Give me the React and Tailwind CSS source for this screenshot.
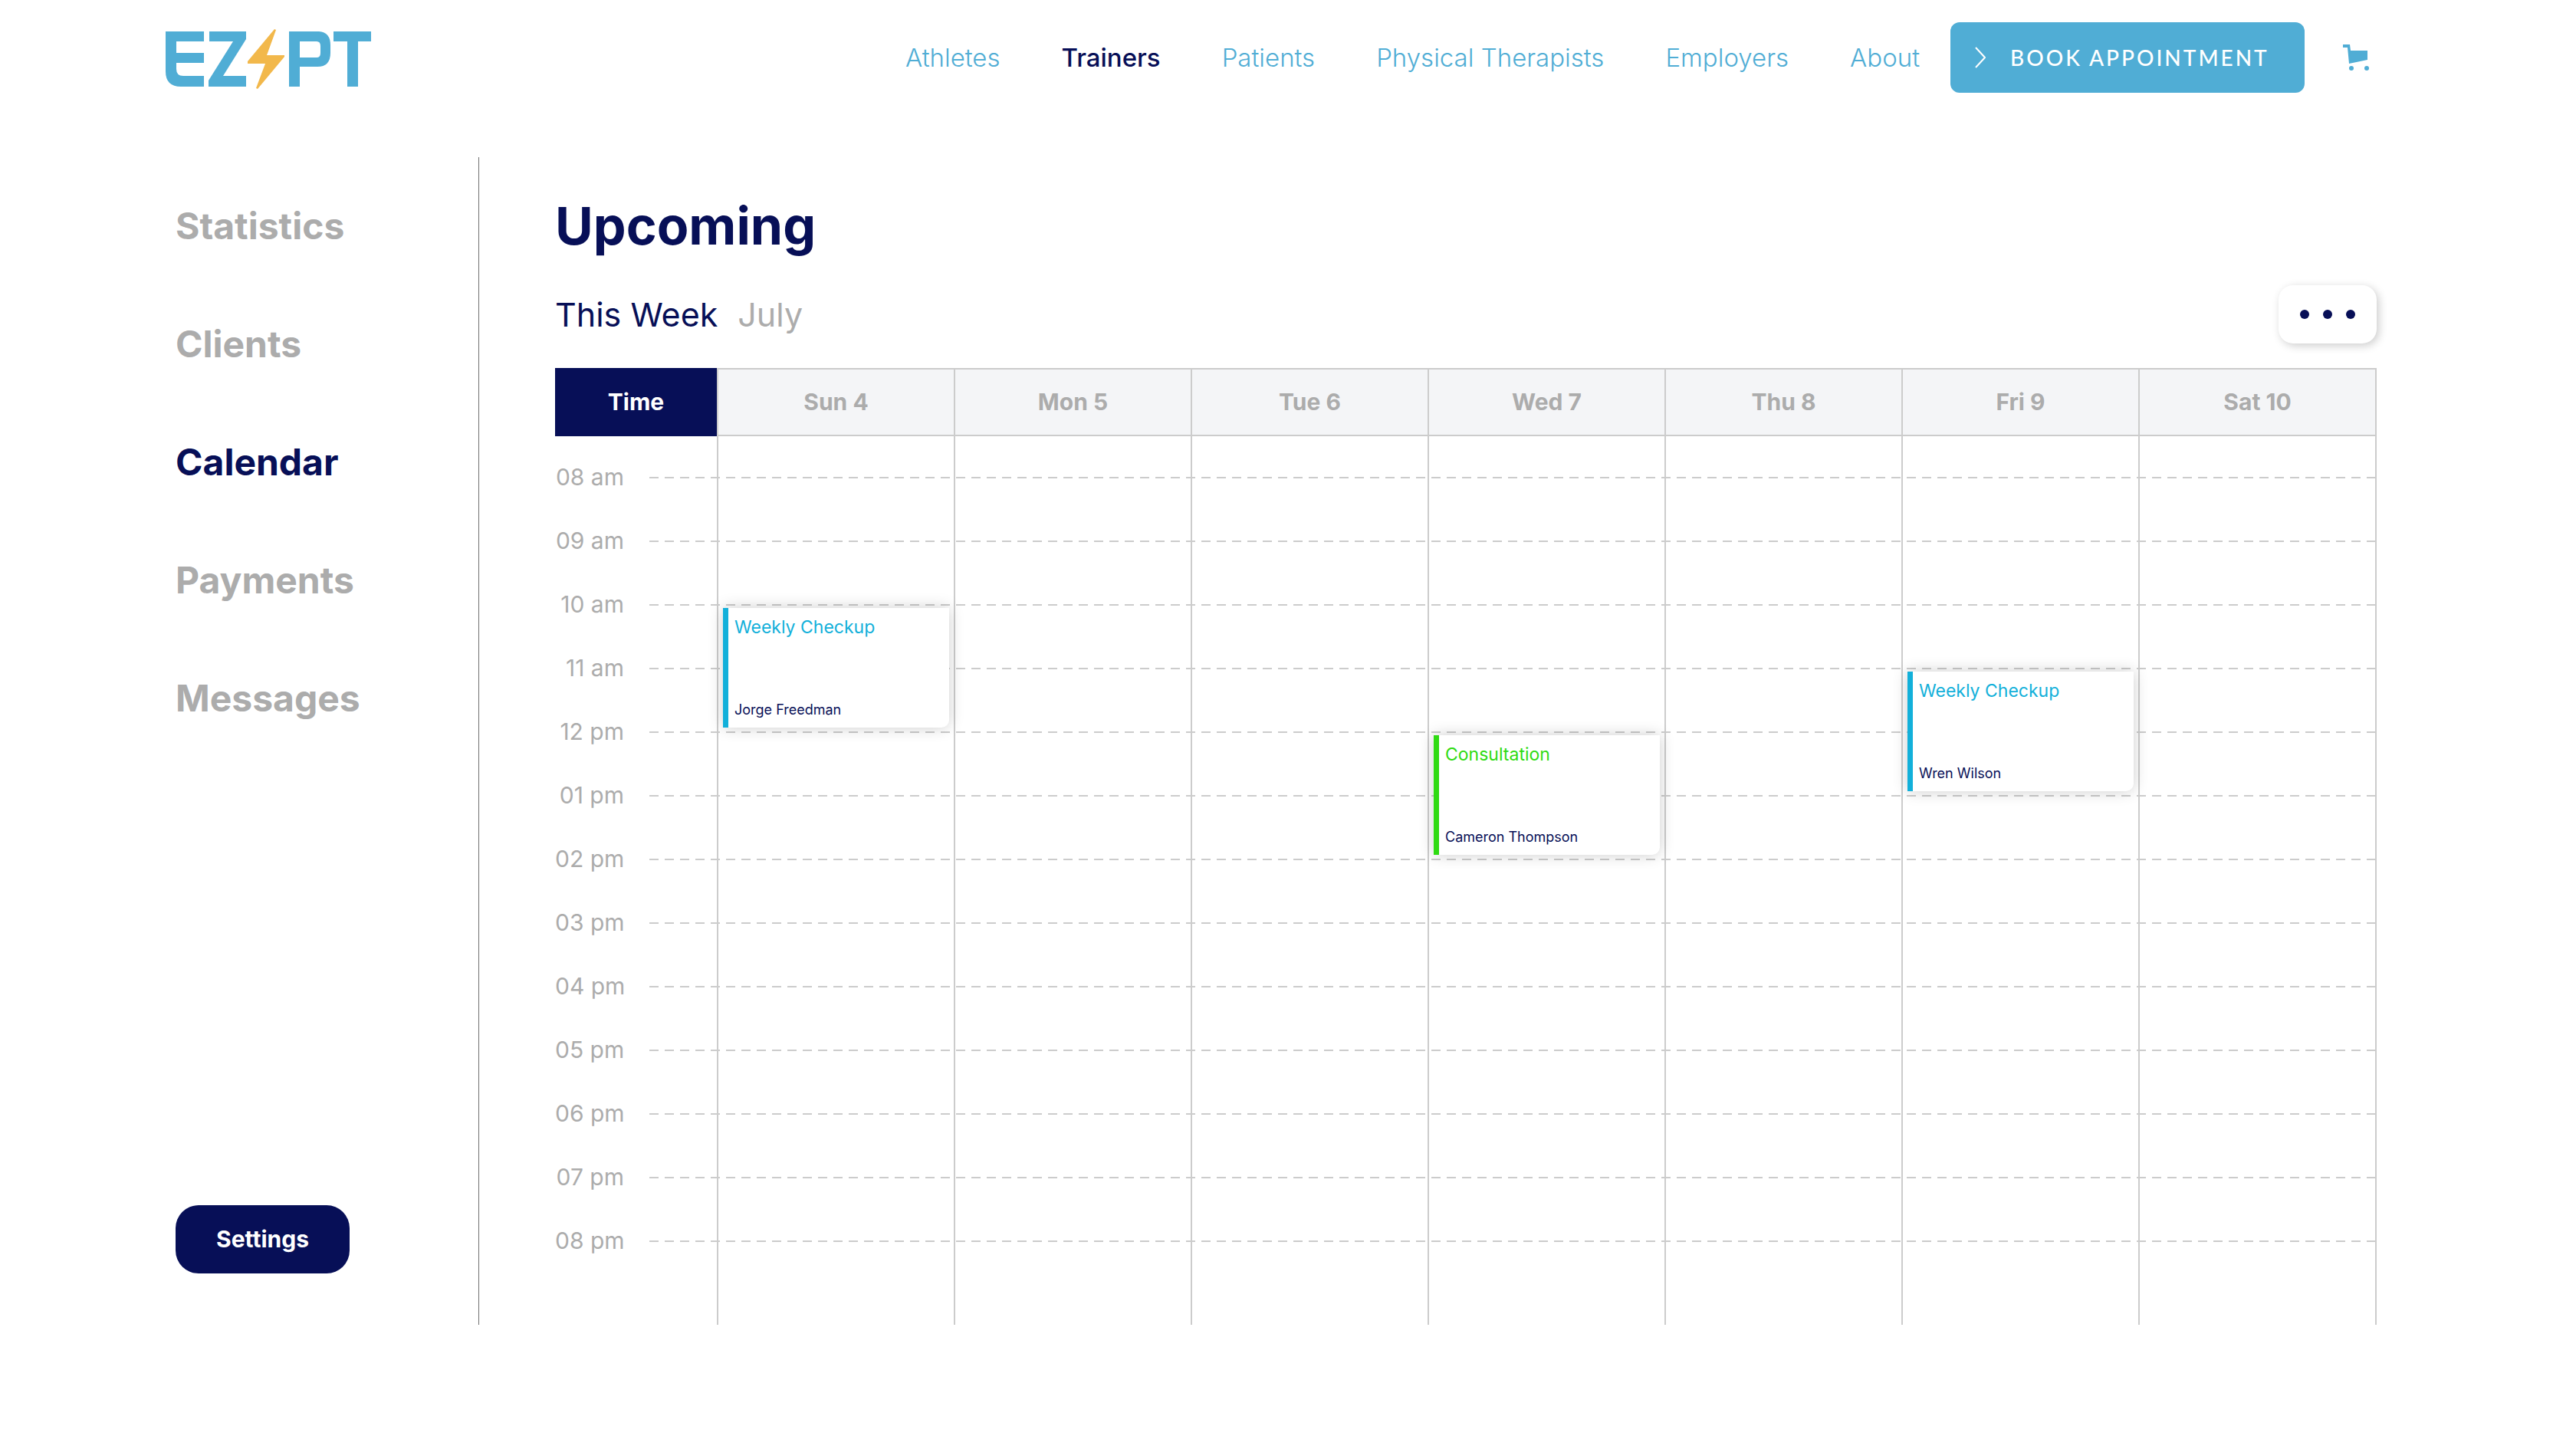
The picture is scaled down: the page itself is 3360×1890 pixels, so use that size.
import React from "react";

const navLinks = ["Athletes", "Trainers", "Patients", "Physical Therapists", "Employers", "About"];
const sideLinks = ["Statistics", "Clients", "Calendar", "Payments", "Messages"];
const days = ["Sun 4", "Mon 5", "Tue 6", "Wed 7", "Thu 8", "Fri 9", "Sat 10"];
const hours = ["08 am", "09 am", "10 am", "11 am", "12 pm", "01 pm", "02 pm", "03 pm", "04 pm", "05 pm", "06 pm", "07 pm", "08 pm"];
const events = [
  { day: "Sun 4", hour: "10 am", title: "Weekly Checkup", person: "Jorge Freedman", tone: "border-[#12b0da] text-[#12b0da]" },
  { day: "Wed 7", hour: "12 pm", title: "Consultation", person: "Cameron Thompson", tone: "border-[#2fdb12] text-[#2fdb12]" },
  { day: "Fri 9", hour: "11 am", title: "Weekly Checkup", person: "Wren Wilson", tone: "border-[#12b0da] text-[#12b0da]" },
];

function Logo() {
  return (
    <svg viewBox="0 0 268 80" className="h-20 w-[268px]" role="img" aria-label="EZPT">
      <g fill="#50add5">
        <path d="M0 4H50V17H14V32H50V45H14V53Q14 62 23 62H50V76H20Q0 76 0 56Z" />
        <path d="M57 4H105V14L75 62H105V76H56V68L88 17H57Z" />
        <path fillRule="evenodd" d="M161 4H200Q215 5 215 22V32Q215 50 198 50H175V76H161ZM175 17V38H197Q202 38 202 32V23Q202 17 197 17Z" />
        <path d="M219 4H268V17H251V76H237V17H219Z" />
      </g>
      <path d="M142 1 107 43V46H130L118 78L120 79L155 37V35H132L144 2Z" fill="#f2b84b" />
    </svg>
  );
}

function EventCard({ event }) {
  return (
    <article className={"absolute left-[6px] right-[6px] top-[46px] z-10 flex h-[156px] flex-col justify-between rounded-br-[10px] border-l-[7px] bg-white py-[10px] pl-2 shadow-[0_0_20px_rgba(0,0,0,0.2)] " + event.tone}>
      <h3 className="text-[23px] leading-[30px]">{event.title}</h3>
      <p className="text-[18px] leading-[26px] text-[#070f57]">{event.person}</p>
    </article>
  );
}

function SpacerRow({ height }) {
  return (
    <tr className={height}>
      <td />
      {days.map((d) => <td key={d} className="border-l-2 border-[#ccc]" />)}
    </tr>
  );
}

export default function App() {
  return (
    <div className="min-h-screen bg-white font-['Inter',sans-serif] text-[#070f57]">
      <header className="flex h-[150px] items-center justify-between pl-[216px] pr-[269px]">
        <a href="#home" className="pt-1"><Logo /></a>
        <div className="flex items-center">
          <nav className="flex gap-20 pr-10 text-[33px] leading-10 text-[#50add5]">
            {navLinks.map((l) => (
              <a key={l} href="#nav" className={l === "Trainers" ? "font-medium text-[#070f57]" : "font-light"}>{l}</a>
            ))}
          </nav>
          <button className="flex h-[92px] w-[462px] items-center gap-8 rounded-xl bg-[#50add5] pl-8 font-['Lato',sans-serif] text-[28px] font-medium tracking-[3px] whitespace-nowrap text-white">
            <svg viewBox="0 0 14 28" className="h-7 w-[14px]" fill="none" stroke="white" strokeWidth="2"><path d="M1 1 13 14 1 27" /></svg>
            BOOK APPOINTMENT
          </button>
          <button aria-label="Cart" className="ml-[50px]">
            <svg viewBox="0 0 35 34" className="h-[34px] w-[35px]" fill="#50add5">
              <path d="M0 0H9L10 8H32V20L8 25L6 4H0Z" /><circle cx="11" cy="31" r="3" /><circle cx="31" cy="31" r="3" />
            </svg>
          </button>
        </div>
      </header>

      <div className="flex pl-[229px] pr-[260px] pt-[55px]">
        <aside className="flex w-[396px] shrink-0 flex-col items-start justify-between border-r border-[#707070] pb-[67px] pt-[58px]">
          <nav className="flex flex-col gap-[90px] text-[48px] font-bold leading-[64px] text-[#acacac]">
            {sideLinks.map((l) => (
              <a key={l} href="#side" className={l === "Calendar" ? "text-[#070f57]" : ""}>{l}</a>
            ))}
          </nav>
          <button className="h-[89px] w-[227px] rounded-[30px] bg-[#070f57] text-[30px] font-bold text-white">Settings</button>
        </aside>

        <main className="min-w-0 flex-1 pl-[99px]">
          <h1 className="pt-11 text-[68px] font-bold leading-[90px]">Upcoming</h1>
          <div className="mt-[33px] flex h-[76px] items-center justify-between">
            <div className="flex gap-[26px] text-[43px] leading-[56px]">
              <button>This Week</button>
              <button className="text-[#acacac]">July</button>
            </div>
            <button aria-label="More options" className="flex h-[76px] w-32 items-center justify-center gap-[18px] rounded-[19px] bg-white shadow-[3px_3px_12px_rgba(0,0,0,0.2)]">
              <span className="size-3 rounded-full bg-[#070f57]" />
              <span className="size-3 rounded-full bg-[#070f57]" />
              <span className="size-3 rounded-full bg-[#070f57]" />
            </button>
          </div>
          <table className="mt-8 w-full table-fixed border-separate border-spacing-0 border-r-2 border-[#ccc]">
            <thead>
              <tr className="h-[89px] text-[30px] text-[#acacac]">
                <th className="w-[211px] bg-[#070f57] text-white">Time</th>
                {days.map((d) => (
                  <th key={d} className="border-y-2 border-l-2 border-[#ccc] bg-[#f4f5f7]">{d}</th>
                ))}
              </tr>
            </thead>
            <tbody>
              <SpacerRow height="h-3" />
              {hours.map((h) => (
                <tr key={h} className="h-[83px] bg-[repeating-linear-gradient(to_right,#ccc_0_12px,transparent_12px_20px)] bg-[length:calc(100%-123px)_2px] bg-right bg-no-repeat">
                  <th scope="row" className="pr-[121px] text-right text-[30px] font-normal whitespace-nowrap text-[#acacac]">{h}</th>
                  {days.map((d) => (
                    <td key={d} className="relative border-l-2 border-[#ccc] p-0">
                      {events.filter((e) => e.day === d && e.hour === h).map((e) => <EventCard key={e.person} event={e} />)}
                    </td>
                  ))}
                </tr>
              ))}
              <SpacerRow height="h-[68px]" />
            </tbody>
          </table>
        </main>
      </div>
    </div>
  );
}
